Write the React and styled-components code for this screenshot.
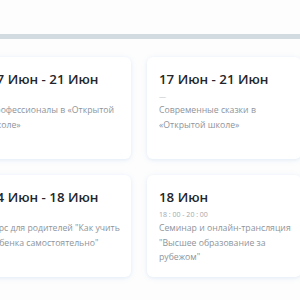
import React from "react";
import styled, { createGlobalStyle } from "styled-components";

const Global = createGlobalStyle`
  html, body { margin: 0; padding: 0; background: #fdfdfd; }
  body { font-family: "Open Sans", "Noto Sans", sans-serif; width: 300px; height: 300px; overflow: hidden; }
`;

const Page = styled.div`
  padding-top: 34px;
`;

const Divider = styled.div`
  height: 5px;
  background: #d2dbdf;
`;

const Grid = styled.div`
  display: grid;
  grid-template-columns: 154px 154px;
  grid-auto-rows: 102px;
  column-gap: 16px;
  row-gap: 16px;
  margin-top: 18px;
  margin-left: -23px;
`;

const Card = styled.div`
  background: #fff;
  border-radius: 6px;
  box-shadow: 0 1px 5px rgba(170, 200, 235, 0.35);
  padding: 14px 3px 12px 12px;
  box-sizing: border-box;
  overflow: hidden;
`;

const Title = styled.div`
  font-size: 13.3px;
  line-height: 16px;
  font-weight: 600;
  color: #23262b;
  white-space: nowrap;
`;

const Time = styled.div`
  margin-top: 4px;
  font-size: 7px;
  line-height: 12px;
  color: ${(p) => (p.$empty ? "#c3c7cc" : "#a3a8ae")};
`;

const Desc = styled.div`
  font-size: 8.7px;
  line-height: 14.5px;
  color: #8e949b;
`;

const events = [
  { title: "17 Июн - 21 Июн", time: null, desc: "Профессионалы в «Открытой школе»" },
  { title: "17 Июн - 21 Июн", time: null, desc: "Современные сказки в «Открытой школе»" },
  { title: "14 Июн - 18 Июн", time: null, desc: "Курс для родителей \"Как учить ребенка самостоятельно\"" },
  { title: "18 Июн", time: "18 : 00 - 20 : 00", desc: "Семинар и онлайн-трансляция \"Высшее образование за рубежом\"" },
];

export default function App() {
  return (
    <>
      <Global />
      <Page>
        <Divider />
        <Grid>
          {events.map((e, i) => (
            <Card key={i}>
              <Title>{e.title}</Title>
              <Time $empty={!e.time}>{e.time || "—"}</Time>
              <Desc>{e.desc}</Desc>
            </Card>
          ))}
        </Grid>
      </Page>
    </>
  );
}
